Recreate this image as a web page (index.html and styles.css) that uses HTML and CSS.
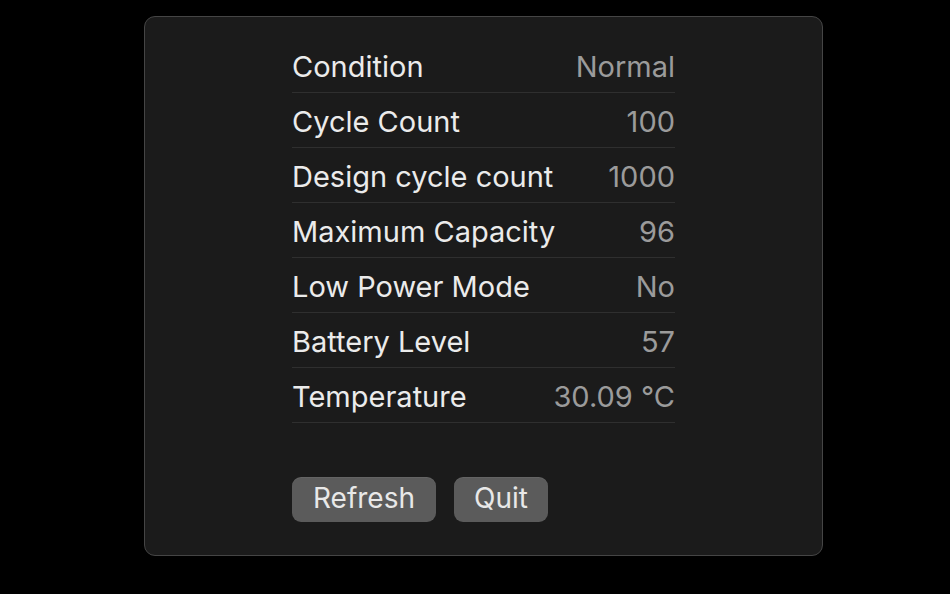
FILE: index.html
```html
<!DOCTYPE html>
<html>
<head>
<meta charset="utf-8">
<link rel="stylesheet" href="styles.css">
</head>
<body>
<div class="panel">
  <div class="content">
    <div class="rows">
      <div class="row"><span class="label">Condition</span><span class="value">Normal</span></div>
      <div class="row"><span class="label">Cycle Count</span><span class="value">100</span></div>
      <div class="row"><span class="label">Design cycle count</span><span class="value">1000</span></div>
      <div class="row"><span class="label">Maximum Capacity</span><span class="value">96</span></div>
      <div class="row"><span class="label">Low Power Mode</span><span class="value">No</span></div>
      <div class="row"><span class="label">Battery Level</span><span class="value">57</span></div>
      <div class="row"><span class="label">Temperature</span><span class="value">30.09 °C</span></div>
    </div>
    <div class="buttons">
      <button class="btn btn-refresh">Refresh</button>
      <button class="btn btn-quit">Quit</button>
    </div>
  </div>
</div>
</body>
</html>
```
FILE: styles.css
```css
html, body {
  margin: 0;
  padding: 0;
  background: #000;
  width: 950px;
  height: 594px;
  overflow: hidden;
  font-family: Inter, "Noto Sans", sans-serif;
}
.panel {
  box-sizing: border-box;
  margin: 16px 0 0 144px;
  width: 679px;
  height: 540px;
  background: #1b1b1b;
  border: 1px solid #454545;
  border-radius: 11px;
}
.content {
  margin-left: 147px;
  width: 383px;
  padding-top: 21px;
}
.row {
  display: flex;
  justify-content: space-between;
  align-items: center;
  height: 52px;
  padding-top: 2px;
  border-bottom: 1px solid #2f2f2f;
  font-size: 29px;
}
.label {
  color: #ebebeb;
}
.value {
  color: #9b9b9b;
}
.buttons {
  display: flex;
  gap: 18px;
  margin-top: 54px;
}
.btn {
  font-family: inherit;
  font-size: 28px;
  color: #e8e8e8;
  background: #5b5b5b;
  border: none;
  border-radius: 9px;
  height: 45px;
  padding: 0 0 3px;
  box-shadow: 0 1px 0 rgba(255,255,255,0.06) inset;
}
.btn-refresh { width: 144px; }
.btn-quit { width: 94px; }
```
